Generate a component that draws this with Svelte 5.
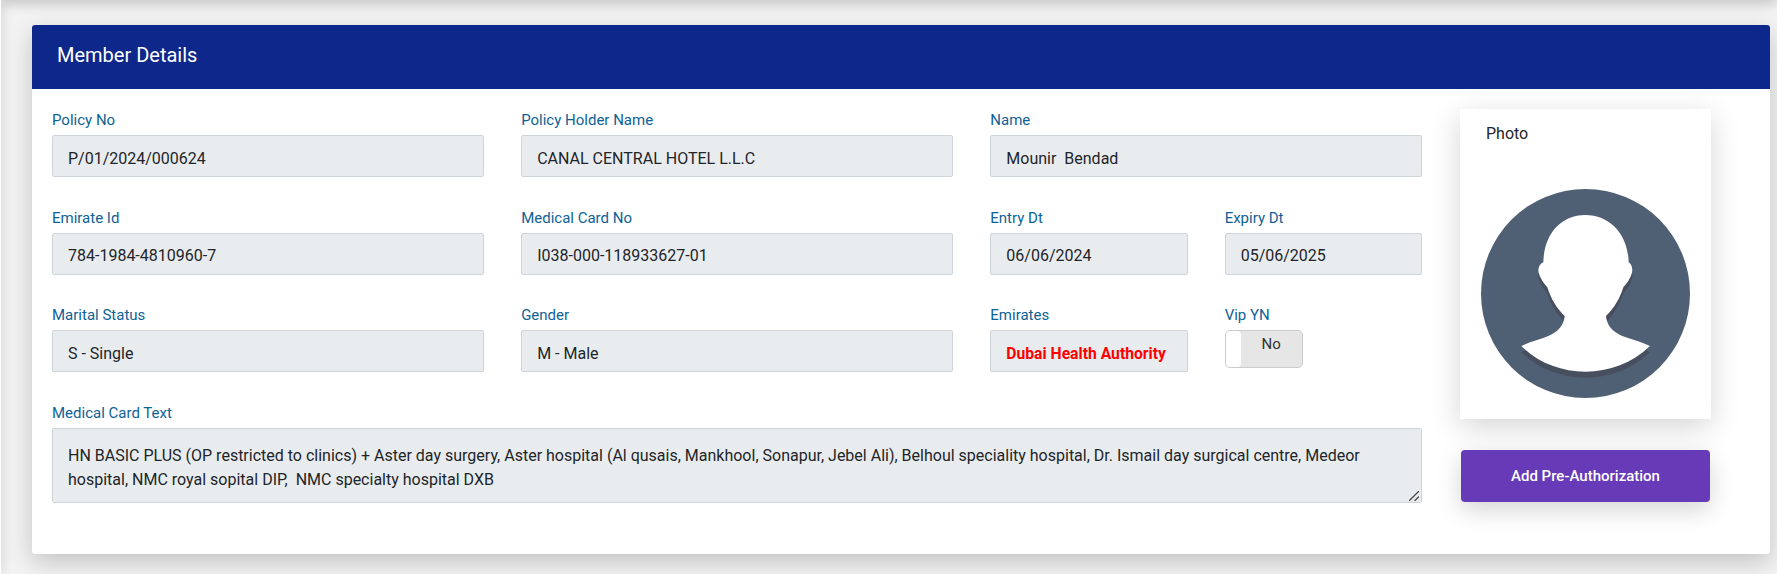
<script lang="ts">
    interface Campo {
        label: string;
        value: string;
    }

    const fila1: Campo[] = [
        { label: 'Policy No', value: 'P/01/2024/000624' },
        { label: 'Policy Holder Name', value: 'CANAL CENTRAL HOTEL L.L.C' },
        { label: 'Name', value: 'Mounir  Bendad' },
    ];
    const fila2: Campo[] = [
        { label: 'Emirate Id', value: '784-1984-4810960-7' },
        { label: 'Medical Card No', value: 'I038-000-118933627-01' },
    ];
    const fila3: Campo[] = [
        { label: 'Marital Status', value: 'S - Single' },
        { label: 'Gender', value: 'M - Male' },
    ];
    const cardText =
        'HN BASIC PLUS (OP restricted to clinics) + Aster day surgery, Aster hospital (Al qusais, Mankhool, Sonapur, Jebel Ali), Belhoul speciality hospital, Dr. Ismail day surgical centre, Medeor hospital, NMC royal sopital DIP,  NMC specialty hospital DXB';
</script>

{#snippet campo(c: Campo)}
    <div class="field">
        <label>{c.label}<input type="text" readonly value={c.value} /></label>
    </div>
{/snippet}

<div class="page">
    <div class="topbar"></div>
    <div class="sidebar"></div>

    <section class="card">
        <header class="card-head">Member Details</header>
        <div class="card-body">
            <div class="fields">
                {#each fila1 as c}
                    {@render campo(c)}
                {/each}

                {#each fila2 as c}
                    {@render campo(c)}
                {/each}
                <div class="pair">
                    {@render campo({ label: 'Entry Dt', value: '06/06/2024' })}
                    {@render campo({ label: 'Expiry Dt', value: '05/06/2025' })}
                </div>

                {#each fila3 as c}
                    {@render campo(c)}
                {/each}
                <div class="pair">
                    <div class="field">
                        <label>Emirates<input class="red" type="text" readonly value="Dubai Health Authority" /></label>
                    </div>
                    <div class="field">
                        <span class="label">Vip YN</span>
                        <div class="toggle">
                            <span class="handle"></span>
                            <span class="toggle-text">No</span>
                        </div>
                    </div>
                </div>

                <div class="field wide">
                    <label>Medical Card Text<textarea readonly value={cardText}></textarea></label>
                    <svg class="grip" viewBox="0 0 10 10" aria-hidden="true">
                        <path d="M0 10L10 0M5.5 10L10 5.5" stroke="#4a4a4a" stroke-width="1.3" fill="none" />
                    </svg>
                </div>
            </div>

            <aside class="side">
                <div class="photo">
                    <div class="photo-title">Photo</div>
                    <svg class="avatar" viewBox="183 297 627 627" aria-label="Photo placeholder">
                        <circle cx="496.5" cy="610.5" r="313.5" fill="#4f5f74" />
                        <path
                            transform="translate(0 18)"
                            fill="#474f5f"
                            d="M496 375C420 375 372 435 370 517C358 522 353 535 356 548C360 565 372 580 382 592C392 625 410 655 434 678C432 705 415 725 385 738C360 748 330 755 304 768C355 820 425 845 496 845C567 845 637 820 690 768C662 755 632 748 607 738C577 725 560 705 558 678C582 655 600 625 610 592C620 580 632 565 636 548C639 535 634 522 626 517C624 435 572 375 496 375Z"
                        />
                        <path
                            fill="#fff"
                            d="M496 375C420 375 372 435 370 517C358 522 353 535 356 548C360 565 372 580 382 592C392 625 410 655 434 678C432 705 415 725 385 738C360 748 330 755 304 768C355 820 425 845 496 845C567 845 637 820 690 768C662 755 632 748 607 738C577 725 560 705 558 678C582 655 600 625 610 592C620 580 632 565 636 548C639 535 634 522 626 517C624 435 572 375 496 375Z"
                        />
                    </svg>
                </div>
                <button type="button" class="add-btn">Add Pre-Authorization</button>
            </aside>
        </div>
    </section>
</div>

<style>
    :global(body) {
        background: #f3f3f3;
        font-family: Roboto, sans-serif;
    }
    .page {
        position: relative;
        height: 574px;
        overflow: hidden;
        padding: 25px 7px 0 32px;
        box-sizing: border-box;
    }
    /* bars just outside the crop, only their shadows show */
    .topbar {
        position: absolute;
        top: -10px;
        left: 0;
        right: 0;
        height: 10px;
        box-shadow: 0 2px 14px rgba(0, 0, 0, 0.28);
    }
    .sidebar {
        position: absolute;
        top: 0;
        bottom: 0;
        left: -9px;
        width: 10px;
        background: #fff;
        box-shadow: 0 0 14px rgba(0, 0, 0, 0.15);
    }
    .card {
        background: #fff;
        border-radius: 3px;
        height: 529px;
        box-shadow: 0 8px 25px rgba(0, 0, 0, 0.2);
    }
    .card-head {
        height: 64px;
        line-height: 60px;
        padding-left: 25px;
        background: #0d278a;
        color: #fff;
        font-size: 20px;
        border-radius: 3px 3px 0 0;
    }
    .card-body {
        display: flex;
        padding: 19px 0 0 20px;
    }
    .fields {
        width: 1370px;
        display: grid;
        grid-template-columns: repeat(3, 431.66px);
        column-gap: 37.5px;
        row-gap: 28.5px;
        align-content: start;
    }
    .pair {
        display: grid;
        grid-template-columns: 197.33px 197.33px;
        column-gap: 37px;
    }
    .wide {
        grid-column: 1 / -1;
        position: relative;
    }
    label,
    .label {
        display: block;
        font-size: 15px;
        line-height: 24px;
        color: #0f6296;
    }
    input,
    textarea {
        display: block;
        width: 100%;
        box-sizing: border-box;
        margin-top: 3px;
        padding: 4px 15px 0;
        height: 42px;
        background: #e9ecef;
        border: 1px solid #ced4da;
        border-radius: 2px;
        font-family: Roboto, sans-serif;
        font-size: 16px;
        color: #212529;
        outline: none;
    }
    textarea {
        height: 75px;
        padding: 15px 15px;
        line-height: 24px;
        resize: none;
    }
    .grip {
        position: absolute;
        right: 3px;
        bottom: 2px;
        width: 10px;
        height: 10px;
    }
    .red {
        color: #ff0000;
        font-size: 15.7px;
        font-weight: 700;
    }
    .toggle {
        display: flex;
        width: 78px;
        height: 38px;
        margin-top: 3px;
        box-sizing: border-box;
        background: #e6e6e6;
        border: 1px solid #ccc;
        border-radius: 5px;
        overflow: hidden;
    }
    .handle {
        width: 15px;
        background: #fff;
        border-radius: 4px;
    }
    .toggle-text {
        flex: 1;
        text-align: center;
        font-size: 15px;
        line-height: 27px;
        color: #333;
    }
    .side {
        width: 251px;
        margin: 1px 0 0 38px;
    }
    .photo {
        height: 310px;
        background: #fff;
        box-shadow: 0 8px 28px rgba(0, 0, 0, 0.17);
        box-sizing: border-box;
        padding: 14px 21px 0;
    }
    .photo-title {
        padding-left: 5px;
        font-size: 16px;
        line-height: 22px;
        color: #212529;
    }
    .avatar {
        display: block;
        width: 209px;
        height: 209px;
        margin-top: 44px;
    }
    .add-btn {
        display: block;
        width: 249px;
        height: 52px;
        margin: 31px 0 0 1px;
        background: #673ab7;
        color: #fff;
        border: none;
        border-radius: 4px;
        font-family: Roboto, sans-serif;
        font-size: 15px;
        font-weight: 500;
        box-shadow: 0 8px 25px rgba(0, 0, 0, 0.17);
    }
</style>
